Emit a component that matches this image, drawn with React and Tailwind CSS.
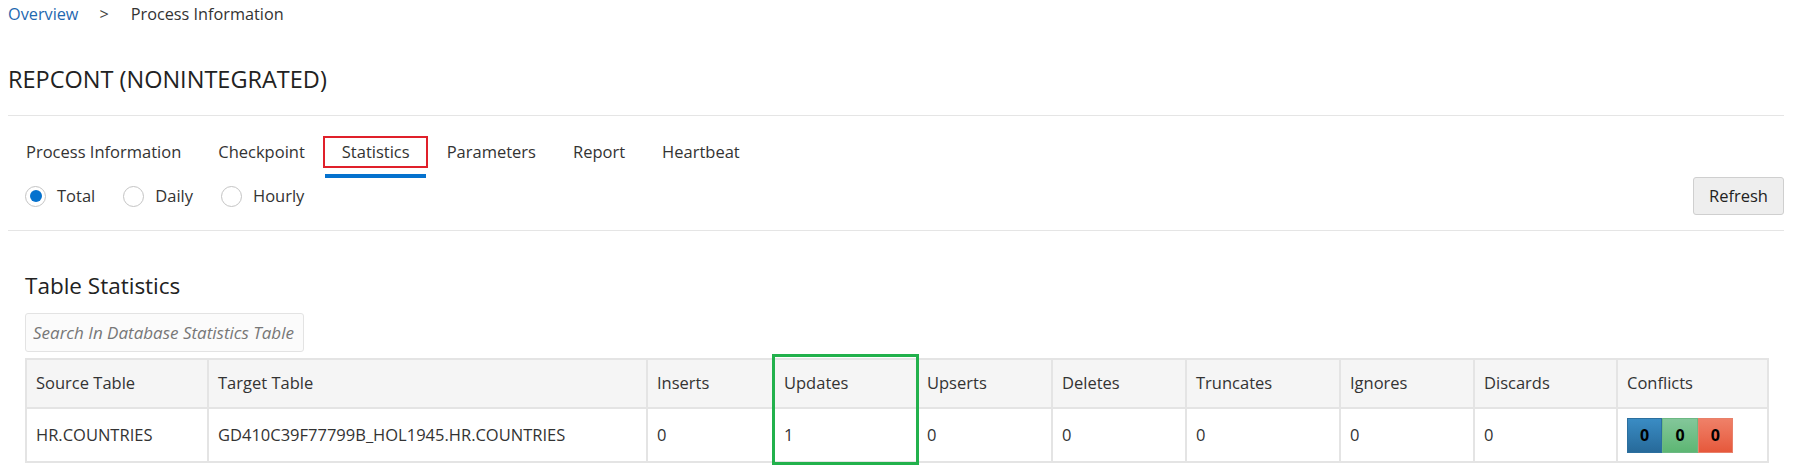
import { useState } from "react";

const tabs = [
  "Process Information",
  "Checkpoint",
  "Statistics",
  "Parameters",
  "Report",
  "Heartbeat",
];

const columns = [
  { name: "Source Table", width: 182 },
  { name: "Target Table", width: 439 },
  { name: "Inserts", width: 127 },
  { name: "Updates", width: 143 },
  { name: "Upserts", width: 135 },
  { name: "Deletes", width: 134 },
  { name: "Truncates", width: 154 },
  { name: "Ignores", width: 134 },
  { name: "Discards", width: 143 },
  { name: "Conflicts", width: 151 },
];

const row = [
  "HR.COUNTRIES",
  "GD410C39F77799B_HOL1945.HR.COUNTRIES",
  "0",
  "1",
  "0",
  "0",
  "0",
  "0",
  "0",
];

function Radio({ label, checked, onClick }) {
  return (
    <button
      onClick={onClick}
      className="flex items-center gap-[11px] mr-[28px] text-[16.5px] text-[#333]"
    >
      <span className="w-[21px] h-[21px] rounded-full border border-[#c4c4c4] bg-white flex items-center justify-center">
        {checked && (
          <span className="w-[12px] h-[12px] rounded-full bg-[#0572ce]" />
        )}
      </span>
      <span>{label}</span>
    </button>
  );
}

export default function App() {
  const [range, setRange] = useState("Total");
  const [search, setSearch] = useState("");

  return (
    <div className="w-[1793px] h-[474px] overflow-hidden bg-white text-[#333] font-['Open_Sans','Noto_Sans',sans-serif]">
      <div className="pl-2 pr-[9px]">
        {/* breadcrumb */}
        <div className="pt-[2px] h-[26px] flex items-center text-[16.25px] leading-6">
          <span className="text-[#1f68b0]">Overview</span>
          <span className="ml-[21px] mr-[22px] text-[#444]">&gt;</span>
          <span className="text-[#333]">Process Information</span>
        </div>

        <h1 className="mt-[37px] text-[23.5px] leading-8 font-normal text-[#222]">
          REPCONT (NONINTEGRATED)
        </h1>

        <div className="mt-5 border-t border-[#e5e5e5]" />

        {/* tabs */}
        <div className="mt-5 flex ml-[-0.5px]">
          {tabs.map((t) => {
            const active = t === "Statistics";
            return (
              <div key={t} className="flex flex-col">
                <div
                  className={
                    "h-[32px] px-[16.5px] flex items-center text-[16.5px] border-2 " +
                    (active ? "border-[#e0202a]" : "border-transparent")
                  }
                >
                  {t}
                </div>
                <div
                  className={
                    "mt-[6px] mx-[2px] h-[4px] " +
                    (active ? "bg-[#0572ce]" : "bg-transparent")
                  }
                />
              </div>
            );
          })}
        </div>

        {/* radios + refresh */}
        <div className="mt-[-1px] h-[38px] flex items-center justify-between pl-[17px]">
          <div className="flex items-center">
            {["Total", "Daily", "Hourly"].map((r) => (
              <Radio
                key={r}
                label={r}
                checked={range === r}
                onClick={() => setRange(r)}
              />
            ))}
          </div>
          <button className="w-[91px] h-[38px] rounded-[3px] border border-[#cfcfcf] bg-[#eeeeee] text-[16.5px] text-[#222]">
            Refresh
          </button>
        </div>

        <div className="mt-[15px] border-t border-[#e5e5e5]" />

        <div className="px-[17px]">
          <h2 className="mt-[40px] text-[22.5px] leading-[30px] font-normal text-[#222]">
            Table Statistics
          </h2>

          <input
            value={search}
            onChange={(e) => setSearch(e.target.value)}
            placeholder="Search In Database Statistics Table"
            className="mt-[12px] w-[279px] h-[39px] pl-[7px] pr-[2px] rounded-[3px] border border-[#e3e3e3] bg-[#fbfbfb] text-[17px] italic placeholder:text-[#777] outline-none"
          />

          <div className="relative mt-[6px]">
            <table className="table-fixed border-collapse w-[1742px] text-[16.5px]">
              <colgroup>
                {columns.map((c) => (
                  <col key={c.name} style={{ width: c.width }} />
                ))}
              </colgroup>
              <thead>
                <tr className="h-[49px] bg-[#f5f5f5]">
                  {columns.map((c) => (
                    <th
                      key={c.name}
                      className="border-2 border-[#e4e4e4] pl-[9px] text-left font-normal text-[#333]"
                    >
                      {c.name}
                    </th>
                  ))}
                </tr>
              </thead>
              <tbody>
                <tr className="h-[54px]">
                  {row.map((v, i) => (
                    <td
                      key={i}
                      className="border-2 border-[#e4e4e4] pl-[9px] text-[#333]"
                    >
                      {v}
                    </td>
                  ))}
                  <td className="border-2 border-[#e4e4e4] pl-[9px]">
                    <div className="flex w-[106px] h-[35px] text-[16px] font-bold text-black">
                      <span className="flex-1 flex items-center justify-center border border-[#2c6f9e] bg-gradient-to-b from-[#3a8cc4] to-[#276a9a]">
                        0
                      </span>
                      <span className="flex-1 flex items-center justify-center border border-[#6cb883] bg-gradient-to-b from-[#83c79a] to-[#5db673]">
                        0
                      </span>
                      <span className="flex-1 flex items-center justify-center border border-[#e8806a] bg-gradient-to-b from-[#ef8068] to-[#e6583b]">
                        0
                      </span>
                    </div>
                  </td>
                </tr>
              </tbody>
            </table>
            {/* highlight annotation around Updates column */}
            <div className="absolute left-[747px] top-[-4px] w-[147px] h-[111px] border-[3px] border-[#22b14c] pointer-events-none" />
          </div>
        </div>
      </div>
    </div>
  );
}
